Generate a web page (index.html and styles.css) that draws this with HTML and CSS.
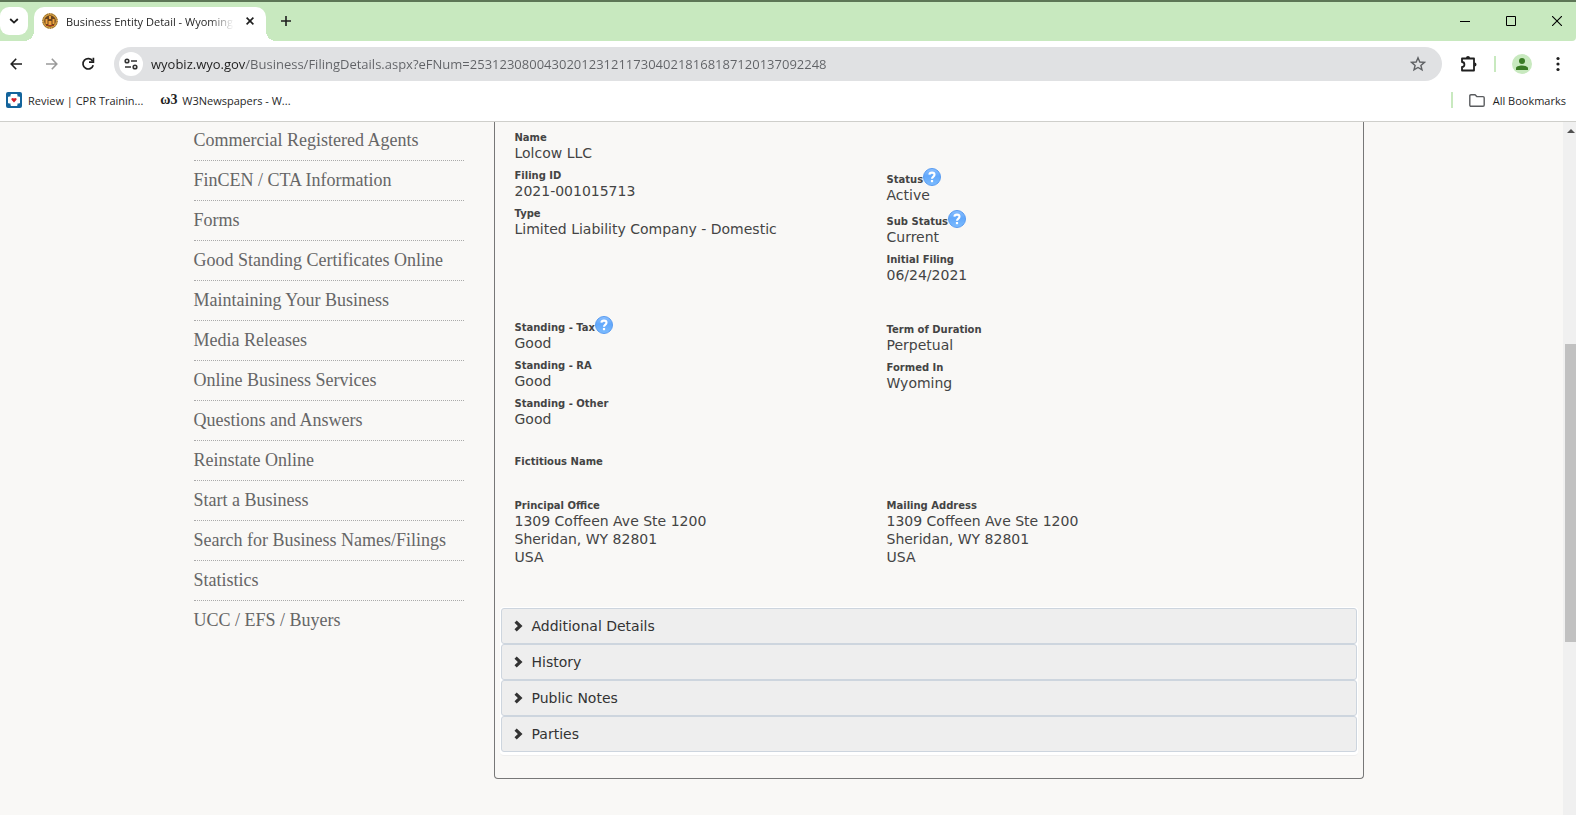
FILE: index.html
```html
<!DOCTYPE html>
<html lang="en">
<head>
<meta charset="utf-8">
<title>Business Entity Detail - Wyoming</title>
<link rel="stylesheet" href="styles.css">
</head>
<body>
<svg class="defs" aria-hidden="true">
  <defs>
    <linearGradient id="blue" x1="0" y1="0" x2="0" y2="1"><stop offset="0" stop-color="#8cc0ff"/><stop offset="0.45" stop-color="#62a8fb"/><stop offset="1" stop-color="#7cbcff"/></linearGradient>
    <symbol id="help" viewBox="0 0 18 18">
      <circle cx="9" cy="9" r="8.5" fill="url(#blue)" stroke="#5a9cf0"/>
      <path d="M6.4 6.6C6.600 3.900 11.500 3.900 11.500 6.700C11.500 8.600 9 8.600 9 10.800" fill="none" stroke="#fff" stroke-width="2.100"/>
      <rect x="7.900" y="12" width="2.200" height="2.200" fill="#fff"/>
    </symbol>
    <symbol id="chevron" viewBox="0 0 9 12"><path d="M1.6 1.6L6.2 6L1.6 10.4" fill="none" stroke="#333" stroke-width="3.2"/></symbol>
  </defs>
</svg>
<header class="browser">
  <div class="tabstrip">
    <button class="tab-search" aria-label="Search tabs"><svg width="10" height="6" viewBox="0 0 10 6"><path d="M1.2 1L5 4.6L8.8 1" fill="none" stroke="#1f1f1f" stroke-width="1.8"/></svg></button>
    <div class="tab">
      <svg width="16" height="16" viewBox="0 0 16 16"><circle cx="8" cy="8" r="7.7" fill="#d9a441"/><circle cx="8" cy="8" r="7.2" fill="none" stroke="#7d5a32" stroke-dasharray="1.5 1"/><circle cx="8" cy="8" r="5.8" fill="#6a4520"/><path d="M7 3h2v3H7zM3.5 6h2v5h-2zM10.5 6h2v5h-2zM6.5 8h3v4h-3z" fill="#f0a33c"/><path d="M4 12h8v1H4z" fill="#a33a1a"/></svg>
      <span class="tab-title">Business Entity Detail - Wyoming</span>
      <button class="tab-close" aria-label="Close tab"><svg width="8" height="8" viewBox="0 0 8 8"><path d="M.6 .6L7.4 7.4M7.4 .6L.6 7.4" stroke="#1f1f1f" stroke-width="1.6"/></svg></button>
    </div>
    <button class="new-tab" aria-label="New tab"><svg width="10" height="10" viewBox="0 0 10 10"><path d="M5 0V10M0 5H10" stroke="#1f1f1f" stroke-width="1.6"/></svg></button>
    <div class="window-controls">
      <button aria-label="Minimize"><svg width="10" height="10" viewBox="0 0 10 10"><path d="M0 5.5H10" stroke="#000"/></svg></button>
      <button aria-label="Maximize"><svg width="10" height="10" viewBox="0 0 10 10"><path d="M.5 .5H9.5V9.5H.5Z" fill="none" stroke="#000"/></svg></button>
      <button aria-label="Close"><svg width="10" height="10" viewBox="0 0 10 10"><path d="M0 0L10 10M10 0L0 10" stroke="#000" stroke-width="1.1"/></svg></button>
    </div>
  </div>
  <div class="toolbar">
    <div class="nav-buttons">
      <button aria-label="Back"><svg width="12" height="12" viewBox="0 0 12 12"><path d="M12 6H1.2M6.2 .8L1.2 6L6.2 11.2" fill="none" stroke="#1f1f1f" stroke-width="1.6"/></svg></button>
      <button aria-label="Forward"><svg width="12" height="12" viewBox="0 0 12 12"><path d="M0 6H10.8M5.8 .8L10.8 6L5.8 11.2" fill="none" stroke="#9a9a9a" stroke-width="1.6"/></svg></button>
      <button aria-label="Reload"><svg width="14" height="14" viewBox="0 0 14 14"><path d="M11.6 4A5.2 5.2 0 1 0 12.2 8.2" fill="none" stroke="#1f1f1f" stroke-width="1.7"/><path d="M12.4 .8V5.2H8" fill="none" stroke="#1f1f1f" stroke-width="1.7"/></svg></button>
    </div>
    <div class="omnibox">
      <button class="site-info" aria-label="View site information"><svg width="14" height="12" viewBox="0 0 14 12"><g fill="none" stroke="#333" stroke-width="1.6"><circle cx="3" cy="3" r="1.8"/><path d="M7 3H13M1 9H7"/><circle cx="11" cy="9" r="1.8"/></g></svg></button>
      <input class="url" type="text" aria-label="Address bar" value="wyobiz.wyo.gov/Business/FilingDetails.aspx?eFNum=253123080043020123121173040218168187120137092248">
      <button aria-label="Bookmark this tab"><svg width="16" height="16" viewBox="0 0 16 16"><path d="M8 1.8L9.8 6L14.4 6.4L10.9 9.4L12 13.9L8 11.5L4 13.9L5.1 9.4L1.6 6.4L6.2 6Z" fill="none" stroke="#5f6164" stroke-width="1.4"/></svg></button>
    </div>
    <div class="tools">
      <button aria-label="Extensions"><svg width="18" height="18" viewBox="0 0 18 18"><path d="M2 3.5H14V15.5H2V12C5.2 12 5.2 7 2 7Z" fill="none" stroke="#1f1f1f" stroke-width="1.8" stroke-linejoin="round"/><path d="M6 3a2 2 0 0 1 4 0zM14.5 7.5a2 2 0 0 1 0 4z" fill="#1f1f1f"/></svg></button>
      <span class="divider"></span>
      <button aria-label="Profile"><svg width="20" height="20" viewBox="0 0 20 20"><circle cx="10" cy="10" r="10" fill="#c8e9bf"/><circle cx="10" cy="7" r="3" fill="#397b24"/><path d="M4 16V14.2C4 10.6 16 10.6 16 14.2V16Z" fill="#397b24"/></svg></button>
      <button aria-label="Menu"><svg width="4" height="16" viewBox="0 0 4 16"><g fill="#1f1f1f"><circle cx="2" cy="2.5" r="1.6"/><circle cx="2" cy="8" r="1.6"/><circle cx="2" cy="13.5" r="1.6"/></g></svg></button>
    </div>
  </div>
  <nav class="bookmarks" aria-label="Bookmarks">
    <a href="#"><svg width="16" height="16" viewBox="0 0 16 16"><rect width="16" height="16" rx="2" fill="#14649c"/><path d="M5 2.500h6v2.500h2.500v6H11v2.500H5V11H2.500V5H5z" fill="#fff" stroke="#fff" stroke-linejoin="round"/><path d="M8 10.500L5.500 7.800C4.800 6 7 5.200 8 6.600C9 5.200 11.200 6 10.500 7.800Z" fill="#d3202b"/></svg>Review | CPR Trainin...</a>
    <a href="#"><span class="w3" aria-hidden="true">ω3</span>W3Newspapers - W...</a>
    <div class="all"><span class="divider"></span><button><svg width="16" height="13" viewBox="0 0 16 13"><path d="M.8 2Q.8 .8 2 .8H6L7.8 2.6H14Q15.2 2.6 15.2 3.8V11Q15.2 12.2 14 12.2H2Q.8 12.2 .8 11Z" fill="none" stroke="#5a5c5f" stroke-width="1.4"/></svg>All Bookmarks</button></div>
  </nav>
</header>
<div class="viewport">
  <div class="page">
    <nav class="sidebar" aria-label="Business">
      <ul>
        <li><a href="#">Commercial Registered Agents</a></li>
        <li><a href="#">FinCEN / CTA Information</a></li>
        <li><a href="#">Forms</a></li>
        <li><a href="#">Good Standing Certificates Online</a></li>
        <li><a href="#">Maintaining Your Business</a></li>
        <li><a href="#">Media Releases</a></li>
        <li><a href="#">Online Business Services</a></li>
        <li><a href="#">Questions and Answers</a></li>
        <li><a href="#">Reinstate Online</a></li>
        <li><a href="#">Start a Business</a></li>
        <li><a href="#">Search for Business Names/Filings</a></li>
        <li><a href="#">Statistics</a></li>
        <li><a href="#">UCC / EFS / Buyers</a></li>
      </ul>
    </nav>
    <main class="panel">
      <div class="details">
        <dl><div><dt>Name</dt><dd>Lolcow LLC</dd></div></dl>
        <div class="columns">
          <dl>
            <div><dt>Filing ID</dt><dd>2021-001015713</dd></div>
            <div><dt>Type</dt><dd>Limited Liability Company - Domestic</dd></div>
          </dl>
          <dl>
            <div><dt class="has-help">Status<svg><use href="#help"/></svg></dt><dd>Active</dd></div>
            <div><dt class="has-help">Sub Status<svg><use href="#help"/></svg></dt><dd>Current</dd></div>
            <div><dt>Initial Filing</dt><dd>06/24/2021</dd></div>
          </dl>
        </div>
        <div class="columns standing">
          <dl>
            <div><dt class="has-help">Standing - Tax<svg><use href="#help"/></svg></dt><dd>Good</dd></div>
            <div><dt>Standing - RA</dt><dd>Good</dd></div>
            <div><dt>Standing - Other</dt><dd>Good</dd></div>
          </dl>
          <dl class="terms">
            <div><dt>Term of Duration</dt><dd>Perpetual</dd></div>
            <div><dt>Formed In</dt><dd>Wyoming</dd></div>
          </dl>
        </div>
        <dl class="fictitious"><div><dt>Fictitious Name</dt><dd></dd></div></dl>
        <div class="columns addresses">
          <dl><div><dt>Principal Office</dt><dd>1309 Coffeen Ave Ste 1200<br>Sheridan, WY 82801<br>USA</dd></div></dl>
          <dl><div><dt>Mailing Address</dt><dd>1309 Coffeen Ave Ste 1200<br>Sheridan, WY 82801<br>USA</dd></div></dl>
        </div>
      </div>
      <div class="accordion">
        <button aria-expanded="false"><svg><use href="#chevron"/></svg>Additional Details</button>
        <button aria-expanded="false"><svg><use href="#chevron"/></svg>History</button>
        <button aria-expanded="false"><svg><use href="#chevron"/></svg>Public Notes</button>
        <button aria-expanded="false"><svg><use href="#chevron"/></svg>Parties</button>
      </div>
    </main>
  </div>
  <div class="scrollbar" aria-hidden="true"><span class="arrow"></span><span class="thumb"></span></div>
</div>
</body>
</html>
```

FILE: styles.css
```css
* { box-sizing: border-box; }
body {
  margin: 0;
  height: 100vh;
  display: flex;
  flex-direction: column;
  overflow: hidden;
  background: #f9f8f6;
  font-family: "DejaVu Sans", Verdana, sans-serif;
}
.defs { position: absolute; width: 0; height: 0; }
button { border: 0; padding: 0; background: none; font: inherit; color: inherit; display: flex; align-items: center; justify-content: center; }
a { color: inherit; text-decoration: none; }
ul, dl, dd { margin: 0; padding: 0; list-style: none; }

/* Browser frame */
.browser {
  flex: none;
  background: #fff;
  border-bottom: 1px solid #cfcfcb;
  font-family: "Open Sans", "Segoe UI", sans-serif;
  font-size: 11px;
  color: #1f1f1f;
}
.tabstrip {
  display: flex;
  height: 41px;
  padding-top: 5px;
  background: #c8e9bf;
  border-top: 2px solid #5d7656;
  border-bottom-right-radius: 4px;
}
.tab-search { width: 28px; height: 28px; border-radius: 9px; background: #fff; }
.tab {
  position: relative;
  display: flex;
  align-items: center;
  width: 232px;
  height: 34px;
  margin-left: 6px;
  padding: 0 12px 6px 8px;
  border-radius: 10px 10px 0 0;
  background: #fff;
}
.tab::before, .tab::after { content: ""; position: absolute; bottom: 0; width: 10px; height: 10px; }
.tab::before { right: 100%; background: radial-gradient(circle at 0 0, transparent 10px, #fff 10px); }
.tab::after { left: 100%; background: radial-gradient(circle at 100% 0, transparent 10px, #fff 10px); }
.tab-title {
  flex: 1;
  margin: 0 12px 0 8px;
  overflow: hidden;
  white-space: nowrap;
  mask-image: linear-gradient(to right, #000 85%, transparent);
}
.new-tab { width: 20px; height: 28px; margin-left: 10px; }
.window-controls { display: flex; gap: 8px; margin-left: auto; height: 28px; }
.window-controls button { width: 38px; }

.toolbar { display: flex; align-items: center; height: 46px; padding-right: 16px; }
.nav-buttons { display: flex; margin-right: 8px; }
.nav-buttons button { width: 36px; height: 36px; }
.nav-buttons button:first-child { width: 34px; padding-right: 2px; }
.omnibox {
  flex: 1;
  display: flex;
  align-items: center;
  height: 34px;
  padding: 0 16px 0 5px;
  border-radius: 17px;
  background: #e0e1e3;
}
.site-info { width: 24px; height: 24px; border-radius: 50%; background: #fff; }
.url {
  flex: 1;
  margin: 0 8px;
  padding: 0;
  border: 0;
  font: 13px/20px "Open Sans", "Segoe UI", sans-serif;
  color: transparent;
  background: linear-gradient(to right, #1f1f1f 94px, #606266 94px);
  background-clip: text;
}
.tools { display: flex; align-items: center; margin-left: 18px; }
.tools .divider { margin: 0 16px; }
.tools button + button { margin-left: 24px; }
.divider { width: 2px; height: 16px; background: #c8e9bf; }

.bookmarks { display: flex; align-items: center; height: 34px; padding: 0 10px 8px 6px; gap: 17px; }
.bookmarks a, .bookmarks button { display: flex; align-items: center; gap: 6px; }
.w3 { width: 16px; font: bold 14px/16px "Liberation Serif", serif; white-space: nowrap; }
.all { display: flex; align-items: center; gap: 16px; margin-left: auto; }
.bookmarks .all button { gap: 8px; }

/* Page */
.viewport { flex: 1; min-height: 0; display: flex; overflow: hidden; }
.page {
  flex: 1;
  display: grid;
  grid-template-columns: 270px 1fr;
  gap: 30px;
  align-items: start;
  max-width: 1176px;
  margin: 0 auto;
  padding-right: 6px;
}
.sidebar { font: 18px/20px "Liberation Serif", "Times New Roman", serif; color: #666; }
.sidebar li { padding: 9px 0 10px; border-bottom: 1px dotted #aaa; }
.sidebar li:first-child { padding-top: 8px; }
.sidebar li:last-child { border-bottom: 0; }
.sidebar a { display: block; }

.panel {
  padding: 9px 5px 22px;
  border: 1px solid #777;
  border-top: 0;
  border-radius: 0 0 4px 4px;
}
.details { padding: 0 15px; color: #444; font-size: 14px; line-height: 18px; }
.details dl > div { padding-bottom: 7px; }
dt { height: 13px; font-size: 10px; line-height: 14px; font-weight: bold; }
.has-help { display: flex; align-items: flex-end; height: 17px; line-height: 12px; }
.has-help svg { width: 18px; height: 18px; }
.columns { display: grid; grid-template-columns: 372px 1fr; }
.standing { margin-top: 26px; }
.terms { padding-top: 6px; }
.fictitious { margin-top: 20px; }
.addresses { margin-top: 24px; }

.accordion {
  margin-top: 34px;
  padding: 1px 1px 3px;
  border-radius: 4px;
  border-bottom: 1px solid #eee;
  background: #fff;
}
.accordion button {
  width: 100%;
  height: 36px;
  justify-content: flex-start;
  gap: 9px;
  padding-left: 12px;
  border: 1px solid #cdd5de;
  border-radius: 3px;
  background: #eee;
  color: #333;
  font-size: 14px;
}
.accordion svg { width: 9px; height: 12px; }

.scrollbar { position: relative; width: 13px; background: #f0f0f0; }
.arrow {
  position: absolute;
  top: 7px;
  right: 1px;
  border: 4px solid transparent;
  border-top-width: 0;
  border-bottom-color: #505050;
}
.thumb { position: absolute; top: 32%; right: 0; width: 11px; height: 43%; background: #c1c1c1; }
```
